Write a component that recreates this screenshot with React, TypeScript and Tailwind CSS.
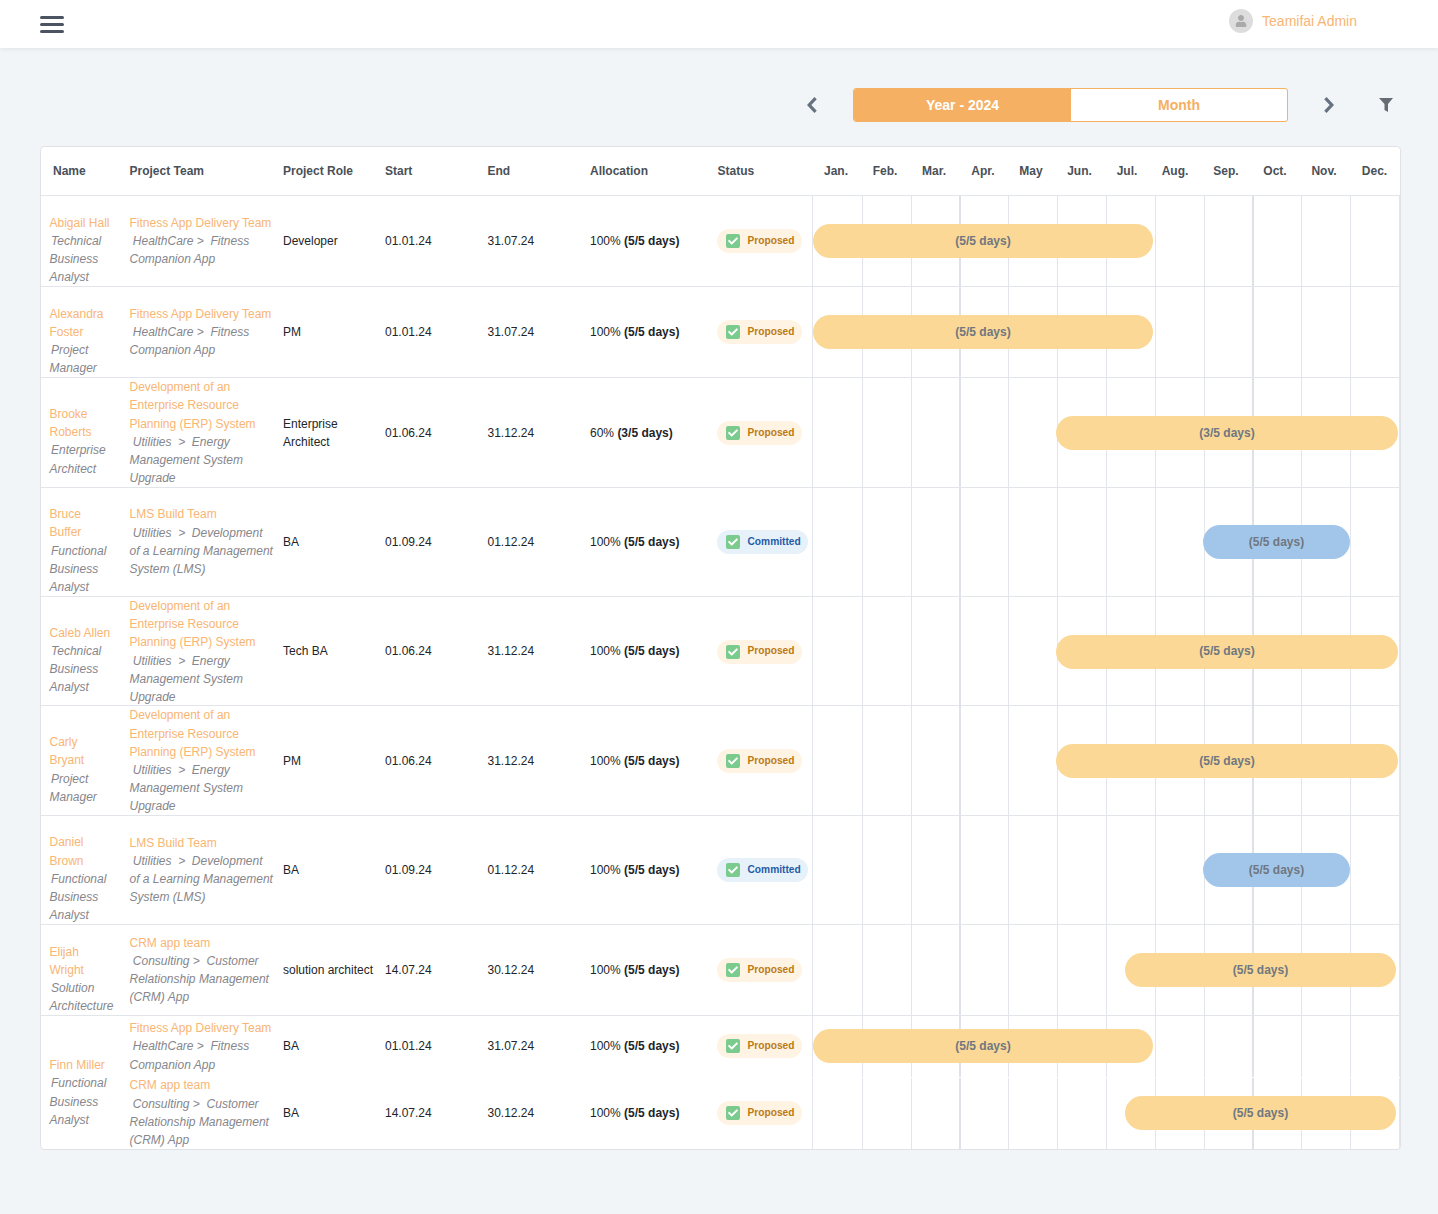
import { FaCheck, FaUser } from "react-icons/fa";

const months = ["Jan.", "Feb.", "Mar.", "Apr.", "May", "Jun.", "Jul.", "Aug.", "Sep.", "Oct.", "Nov.", "Dec."];

type Assignment = {
  team: string;
  path: string;
  role: string;
  start: string;
  end: string;
  pct: string;
  days: string;
  status: "Proposed" | "Committed";
  bar: string;
};

const BAR_JAN_JUL = "left-[1px] w-[340px]";
const BAR_JUN_DEC = "left-[244px] w-[342px]";
const BAR_SEP_NOV = "left-[391px] w-[147px]";
const BAR_JUL_DEC = "left-[313px] w-[271px]";

const fitness = { team: "Fitness App Delivery Team", path: "\u00a0HealthCare >\u00a0\u00a0Fitness Companion App", start: "01.01.24", end: "31.07.24", bar: BAR_JAN_JUL };
const erp = { team: "Development of an Enterprise Resource Planning (ERP) System", path: "\u00a0Utilities\u00a0\u00a0>\u00a0\u00a0Energy Management System Upgrade", start: "01.06.24", end: "31.12.24", bar: BAR_JUN_DEC };
const lms = { team: "LMS Build Team", path: "\u00a0Utilities\u00a0\u00a0>\u00a0\u00a0Development of a Learning Management System (LMS)", start: "01.09.24", end: "01.12.24", bar: BAR_SEP_NOV };
const crm = { team: "CRM app team", path: "\u00a0Consulting >\u00a0\u00a0Customer Relationship Management (CRM) App", start: "14.07.24", end: "30.12.24", bar: BAR_JUL_DEC };

const full = { pct: "100%", days: "(5/5 days)" };

const rows: { name: string; title: string; height: string; items: (Assignment & { height?: string })[] }[] = [
  { name: "Abigail Hall", title: "Technical Business Analyst", height: "h-[91px]", items: [{ ...fitness, ...full, role: "Developer", status: "Proposed" }] },
  { name: "Alexandra Foster", title: "Project Manager", height: "h-[91px]", items: [{ ...fitness, ...full, role: "PM", status: "Proposed" }] },
  { name: "Brooke Roberts", title: "Enterprise Architect", height: "h-[109.4px]", items: [{ ...erp, pct: "60%", days: "(3/5 days)", role: "Enterprise Architect", status: "Proposed" }] },
  { name: "Bruce Buffer", title: "Functional Business Analyst", height: "h-[109.4px]", items: [{ ...lms, ...full, role: "BA", status: "Committed" }] },
  { name: "Caleb Allen", title: "Technical Business Analyst", height: "h-[109.4px]", items: [{ ...erp, ...full, role: "Tech BA", status: "Proposed" }] },
  { name: "Carly Bryant", title: "Project Manager", height: "h-[109.4px]", items: [{ ...erp, ...full, role: "PM", status: "Proposed" }] },
  { name: "Daniel Brown", title: "Functional Business Analyst", height: "h-[109.4px]", items: [{ ...lms, ...full, role: "BA", status: "Committed" }] },
  { name: "Elijah Wright", title: "Solution Architecture", height: "h-[91px]", items: [{ ...crm, ...full, role: "solution architect", status: "Proposed" }] },
  {
    name: "Finn Miller",
    title: "Functional Business Analyst",
    height: "h-[132.8px]",
    items: [
      { ...fitness, ...full, role: "BA", status: "Proposed", height: "h-[60.6px]" },
      { ...crm, ...full, role: "BA", status: "Proposed", height: "h-[72.2px]" },
    ],
  },
];

function Chevron({ direction }: { direction: "left" | "right" }) {
  return (
    <svg viewBox="0 0 10 16" className="h-4 w-[10px] text-[#667280]" fill="none" stroke="currentColor" strokeWidth="3.2">
      <path d={direction === "left" ? "M8.6 1.2 2.2 8l6.4 6.8" : "M1.4 1.2 7.8 8l-6.4 6.8"} />
    </svg>
  );
}

function StatusPill({ status }: { status: Assignment["status"] }) {
  const committed = status === "Committed";
  return (
    <span
      className={
        committed
          ? "-ml-[0.5px] flex h-6 items-center gap-[8px] rounded-full bg-[#e7f1fa] pr-[7px] pl-[8.5px] text-[10.2px] font-bold text-[#1f5ca8]"
          : "-ml-[0.5px] flex h-6 items-center gap-[8px] rounded-full bg-[#fff4e4] pr-2 pl-[8.5px] text-[10.2px] font-bold text-[#bd7a14]"
      }
    >
      <span className="flex size-[14px] items-center justify-center rounded-[2px] bg-[#7acb8d] text-white">
        <FaCheck className="size-[10px]" />
      </span>
      {status}
    </span>
  );
}

function MonthGrid() {
  return (
    <div className="grid h-full grid-cols-[50px_49px_48px_49px_49px_49px_49px_49px_48px_49px_49px_49px] border-r border-[#e2e5ea]">
      {months.map((m, i) => (
        <div
          key={m}
          className={i === 3 || i === 9 ? "border-l-2 border-[#dee2e8]" : "border-l border-[#e2e5ea]"}
        />
      ))}
    </div>
  );
}

function AssignmentRow({ item, index }: { item: Assignment & { height?: string }; index: number }) {
  const committed = item.status === "Committed";
  return (
    <div className={`flex flex-1 items-stretch ${item.height ?? ""}`}>
      <div className="flex w-[153.5px] shrink-0 flex-col justify-center pr-[8.5px]">
        <span className="text-[#f9b574]">{item.team}</span>
        <span className="text-[#86868c] italic">{item.path}</span>
      </div>
      <div className="flex w-[102px] shrink-0 items-center pr-2 text-[#212529]">{item.role}</div>
      <div className="flex w-[102.5px] shrink-0 items-center text-[#212529]">{item.start}</div>
      <div className="flex w-[102.5px] shrink-0 items-center text-[#212529]">{item.end}</div>
      <div className="flex w-[127.5px] shrink-0 items-center text-[#212529]">
        <span>
          {item.pct} <b>{item.days}</b>
        </span>
      </div>
      <div className="flex w-[94.5px] shrink-0 items-center">
        <StatusPill status={item.status} />
      </div>
      <div className={index > 0 ? "relative w-[588px] shrink-0 border-t border-white" : "relative w-[588px] shrink-0"}>
        <MonthGrid />
        <div
          className={`absolute inset-y-0 my-auto flex h-[34px] items-center justify-center rounded-[17px] font-bold text-[#6f7780] ${item.bar} ${
            committed ? "bg-[#a2c6ea]" : "bg-[#fbd896]"
          }`}
        >
          {item.days}
        </div>
      </div>
    </div>
  );
}

export default function App() {
  return (
    <div className="min-h-screen bg-[#f2f5f8] font-['Liberation_Sans',Arial,sans-serif] text-[12px] leading-[18.2px]">
      <header className="flex h-12 items-center justify-between bg-white pr-[81px] pl-10 shadow-[0_1px_5px_rgba(0,0,0,0.08)]">
        <div className="flex w-6 flex-col gap-[4px]">
          <span className="h-[3px] rounded-sm bg-[#4d5461]" />
          <span className="h-[3px] rounded-sm bg-[#4d5461]" />
          <span className="h-[3px] rounded-sm bg-[#4d5461]" />
        </div>
        <div className="-mt-[6px] flex items-center gap-[9px]">
          <span className="flex size-6 items-center justify-center rounded-full bg-[#dddddd] text-[#a9a9a9]">
            <FaUser className="size-3" />
          </span>
          <span className="text-[14px] text-[#f9b574]">Teamifai Admin</span>
        </div>
      </header>

      <div className="flex h-[98px] items-center pt-4 pl-[807px]">
        <Chevron direction="left" />
        <div className="ml-9 flex h-[34px] w-[435px] overflow-hidden rounded-[3px] border border-[#f5b063] bg-white text-[14px] font-bold">
          <button className="w-[217px] bg-[#f5b063] text-white">Year - 2024</button>
          <button className="flex-1 text-[#f5b063]">Month</button>
        </div>
        <div className="ml-9">
          <Chevron direction="right" />
        </div>
        <svg viewBox="0 0 14 14" className="ml-[45px] size-[14px] text-[#666c74]" fill="currentColor">
          <path d="M0 0h14L9 6v8L5.5 12V6z" />
        </svg>
      </div>

      <div className="mx-10 w-[1361px] overflow-hidden rounded-[4px] border border-[#dfe3e8] bg-white">
        <div className="flex h-[49.2px] items-center border-b border-[#e2e5ea] text-[12px] font-bold text-[#4a5058]">
          <div className="w-[88.5px] shrink-0 pl-3">Name</div>
          <div className="w-[153.5px] shrink-0">Project Team</div>
          <div className="w-[102px] shrink-0">Project Role</div>
          <div className="w-[102.5px] shrink-0">Start</div>
          <div className="w-[102.5px] shrink-0">End</div>
          <div className="w-[127.5px] shrink-0">Allocation</div>
          <div className="w-[94.5px] shrink-0">Status</div>
          <div className="grid w-[588px] shrink-0 grid-cols-[48px_50px_48px_50px_46px_51px_44px_52px_50px_48px_50px_51px] text-center">
            {months.map((m) => (
              <span key={m}>{m}</span>
            ))}
          </div>
        </div>

        {rows.map((row, r) => (
          <div
            key={row.name}
            className={`flex ${row.height} ${r < rows.length - 1 ? "border-b border-[#e2e5ea]" : ""}`}
          >
            <div
              className={
                r === rows.length - 1
                  ? "flex w-[88.5px] shrink-0 flex-col justify-center pt-5 pr-[14px] pl-[8.5px]"
                  : "flex w-[88.5px] shrink-0 flex-col justify-center pt-[18px] pr-[14px] pl-[8.5px]"
              }
            >
              <span className="text-[#f9b574]">{row.name}</span>
              <span className="indent-[1.5px] text-[#86868c] italic">{row.title}</span>
            </div>
            <div className="flex flex-1 flex-col">
              {row.items.map((item, i) => (
                <AssignmentRow key={item.team} item={item} index={i} />
              ))}
            </div>
          </div>
        ))}
      </div>
    </div>
  );
}
